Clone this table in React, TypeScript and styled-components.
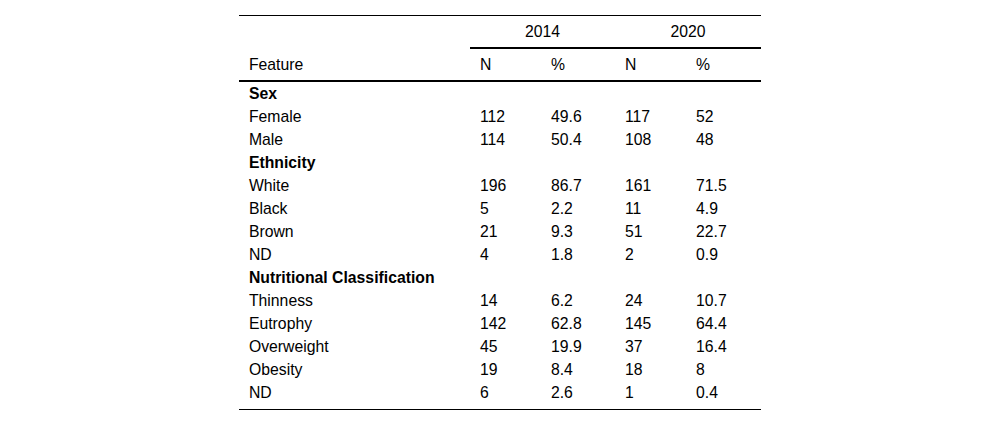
import styled, { createGlobalStyle } from "styled-components";

const GlobalStyle = createGlobalStyle`
  body {
    margin: 0;
    background: #ffffff;
    font-family: "Liberation Sans", Arial, sans-serif;
    color: #000000;
  }
`;

const Table = styled.table`
  width: 522px;
  margin: 15px auto 0;
  border-collapse: separate;
  border-spacing: 0;
  table-layout: fixed;
  font-size: 15.75px;
`;

const HeadCell = styled.th<{ $top?: boolean; $rule?: boolean; $center?: boolean }>`
  padding: 4px 10px;
  line-height: 23px;
  font-weight: normal;
  text-align: ${(p) => (p.$center ? "center" : "left")};
  vertical-align: middle;
  border-top: ${(p) => (p.$top ? "1px solid #000" : "none")};
  border-bottom: ${(p) => (p.$rule ? "2px solid #000" : "none")};
`;

const Cell = styled.td<{ $last?: boolean }>`
  padding: 0 10px ${(p) => (p.$last ? "5px" : "0")};
  line-height: 23px;
  text-align: left;
  white-space: nowrap;
  border-bottom: ${(p) => (p.$last ? "1px solid #000" : "none")};
`;

const GroupCell = styled.td`
  padding: 0 10px;
  line-height: 23px;
  font-weight: bold;
  white-space: nowrap;
`;

type Row = [string, string, string, string, string];

const groups: { title: string; rows: Row[] }[] = [
  {
    title: "Sex",
    rows: [
      ["Female", "112", "49.6", "117", "52"],
      ["Male", "114", "50.4", "108", "48"],
    ],
  },
  {
    title: "Ethnicity",
    rows: [
      ["White", "196", "86.7", "161", "71.5"],
      ["Black", "5", "2.2", "11", "4.9"],
      ["Brown", "21", "9.3", "51", "22.7"],
      ["ND", "4", "1.8", "2", "0.9"],
    ],
  },
  {
    title: "Nutritional Classification",
    rows: [
      ["Thinness", "14", "6.2", "24", "10.7"],
      ["Eutrophy", "142", "62.8", "145", "64.4"],
      ["Overweight", "45", "19.9", "37", "16.4"],
      ["Obesity", "19", "8.4", "18", "8"],
      ["ND", "6", "2.6", "1", "0.4"],
    ],
  },
];

export default function App() {
  const lastGroup = groups.length - 1;
  return (
    <>
      <GlobalStyle />
      <Table>
        <colgroup>
          <col style={{ width: 231 }} />
          <col style={{ width: 71 }} />
          <col style={{ width: 74 }} />
          <col style={{ width: 71 }} />
          <col style={{ width: 75 }} />
        </colgroup>
        <thead>
          <tr>
            <HeadCell $top />
            <HeadCell $top $rule $center colSpan={2}>
              2014
            </HeadCell>
            <HeadCell $top $rule $center colSpan={2}>
              2020
            </HeadCell>
          </tr>
          <tr>
            <HeadCell $rule>Feature</HeadCell>
            <HeadCell $rule>N</HeadCell>
            <HeadCell $rule>%</HeadCell>
            <HeadCell $rule>N</HeadCell>
            <HeadCell $rule>%</HeadCell>
          </tr>
        </thead>
        <tbody>
          {groups.map((g, gi) => (
            <>
              <tr key={g.title}>
                <GroupCell colSpan={5}>{g.title}</GroupCell>
              </tr>
              {g.rows.map((r, ri) => {
                const last = gi === lastGroup && ri === g.rows.length - 1;
                return (
                  <tr key={g.title + r[0]}>
                    {r.map((v, ci) => (
                      <Cell key={ci} $last={last}>
                        {v}
                      </Cell>
                    ))}
                  </tr>
                );
              })}
            </>
          ))}
        </tbody>
      </Table>
    </>
  );
}
